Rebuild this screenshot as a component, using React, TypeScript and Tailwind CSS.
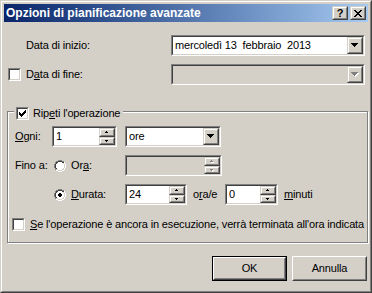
import React from 'react';

function Sunken({ className = '', disabled = false, children }: { className?: string; disabled?: boolean; children?: React.ReactNode }) {
  return (
    <div className={`border border-t-[#808080] border-l-[#808080] border-b-white border-r-white ${className}`}>
      <div className={`h-full w-full border border-t-[#404040] border-l-[#404040] border-b-[#d4d0c8] border-r-[#d4d0c8] flex ${disabled ? 'bg-[#d4d0c8]' : 'bg-white'}`}>
        {children}
      </div>
    </div>
  );
}

function Raised({ className = '', children }: { className?: string; children?: React.ReactNode }) {
  return (
    <div className={`border border-t-[#d4d0c8] border-l-[#d4d0c8] border-b-[#404040] border-r-[#404040] ${className}`}>
      <div className="h-full w-full border border-t-white border-l-white border-b-[#808080] border-r-[#808080] bg-[#d4d0c8] flex items-center justify-center">
        {children}
      </div>
    </div>
  );
}

function DownArrow({ disabled = false }: { disabled?: boolean }) {
  return (
    <svg width="8" height="5" viewBox="0 0 8 5" shapeRendering="crispEdges">
      {disabled && <path d="M1 1h7v1h-7zM2 2h5v1h-5zM3 3h3v1h-3zM4 4h1v1h-1z" fill="#ffffff" />}
      <path d="M0 0h7v1h-7zM1 1h5v1h-5zM2 2h3v1h-3zM3 3h1v1h-1z" fill={disabled ? '#808080' : '#000000'} />
    </svg>
  );
}

function SmallArrow({ up, disabled = false }: { up: boolean; disabled?: boolean }) {
  return (
    <svg width="6" height="4" viewBox="0 0 6 4" shapeRendering="crispEdges">
      {disabled && <path d={up ? 'M3 1h1v1h-1zM2 2h3v1h-3z' : 'M2 2h3v1h-3zM3 3h1v1h-1z'} fill="#ffffff" />}
      <path d={up ? 'M2 0h1v1h-1zM1 1h3v1h-3z' : 'M1 1h3v1h-3zM2 2h1v1h-1z'} fill={disabled ? '#808080' : '#000000'} />
    </svg>
  );
}

function Combo({ value, width, disabled = false }: { value?: string; width: string; disabled?: boolean }) {
  return (
    <Sunken className={`${width} h-[21px]`} disabled={disabled}>
      <div className="flex-1 pl-[2px] pt-[1px] leading-[15px] whitespace-pre">{value}</div>
      <Raised className="w-[16px] h-full">
        <DownArrow disabled={disabled} />
      </Raised>
    </Sunken>
  );
}

function Spin({ value, width, disabled = false }: { value?: string; width: string; disabled?: boolean }) {
  return (
    <Sunken className={`${width} h-[21px]`} disabled={disabled}>
      <div className="flex-1 pl-[2px] pt-[1px] leading-[15px]">{value}</div>
      <div className="w-[16px] flex flex-col">
        <Raised className="h-[9px]">
          <SmallArrow up disabled={disabled} />
        </Raised>
        <Raised className="h-[8px]">
          <SmallArrow up={false} disabled={disabled} />
        </Raised>
      </div>
    </Sunken>
  );
}

function Check({ checked = false }: { checked?: boolean }) {
  return (
    <Sunken className="w-[13px] h-[13px] shrink-0">
      {checked && (
        <svg width="9" height="9" viewBox="0 0 9 9" shapeRendering="crispEdges">
          <path d="M1 3h1v3h-1zM2 4h1v3h-1zM3 5h1v3h-1zM4 4h1v3h-1zM5 3h1v3h-1zM6 2h1v3h-1zM7 1h1v3h-1z" fill="#000" />
        </svg>
      )}
    </Sunken>
  );
}

function Radio({ checked = false }: { checked?: boolean }) {
  return (
    <svg width="12" height="12" viewBox="0 0 12 12" shapeRendering="crispEdges" className="shrink-0">
      <path d="M4 0h4v1h-4zM2 1h2v1h-2zM8 1h2v1h-2zM1 2h1v2h-1zM0 4h1v4h-1zM1 8h1v2h-1z" fill="#808080" />
      <path d="M4 1h4v1h-4zM2 2h2v1h-2zM8 2h2v1h-2zM2 3h1v1h-1zM1 4h1v4h-1zM2 8h1v1h-1z" fill="#404040" />
      <path d="M10 2h1v2h-1zM11 4h1v4h-1zM10 8h1v2h-1zM8 10h2v1h-2zM4 11h4v1h-4zM2 10h2v1h-2z" fill="#ffffff" />
      <path d="M10 4h1v4h-1zM9 8h1v1h-1zM8 9h2v1h-2zM4 10h4v1h-4zM2 9h2v1h-2z" fill="#d4d0c8" />
      <path d="M4 2h4v1h-4zM3 3h6v1h-6zM2 4h8v4h-8zM3 8h6v1h-6zM4 9h4v1h-4z" fill="#ffffff" />
      {checked && <path d="M5 4h2v1h-2zM4 5h4v2h-4zM5 7h2v1h-2z" fill="#000" />}
    </svg>
  );
}

function U({ children }: { children: React.ReactNode }) {
  return <span className="underline underline-offset-[1px] decoration-1">{children}</span>;
}

function PushButton({ label, isDefault = false }: { label: string; isDefault?: boolean }) {
  return (
    <div className={`w-[75px] h-[25px] ${isDefault ? 'border border-black' : ''}`}>
      <div className="h-full w-full border border-t-white border-l-white border-b-[#404040] border-r-[#404040]">
        <div className="h-full w-full border border-t-[#d4d0c8] border-l-[#d4d0c8] border-b-[#808080] border-r-[#808080] flex items-center justify-center">
          {label}
        </div>
      </div>
    </div>
  );
}

export default function App() {
  return (
    <div className="w-[372px] h-[293px] font-['Liberation_Sans',Arial,sans-serif] text-[11px] text-black tracking-[-0.15px]">
      <div className="h-full w-full border border-t-[#d4d0c8] border-l-[#d4d0c8] border-b-[#404040] border-r-[#404040]">
        <div className="h-full w-full border border-t-white border-l-white border-b-[#808080] border-r-[#808080] bg-[#d4d0c8] p-[2px] flex flex-col">
          {/* Title bar */}
          <div className="h-[18px] flex items-center bg-gradient-to-r from-[#0a246a] to-[#a6caf0] pl-[2px] pr-[2px]">
            <div className="flex-1 text-white font-bold text-[12px] tracking-normal">Opzioni di pianificazione avanzate</div>
            <div className="flex gap-[2px]">
              <Raised className="w-[16px] h-[14px]">
                <span className="font-bold text-[11px] leading-none tracking-normal">?</span>
              </Raised>
              <Raised className="w-[16px] h-[14px]">
                <svg width="8" height="7" viewBox="0 0 8 7" shapeRendering="crispEdges">
                  <path d="M0 0h2v1h-2zM6 0h2v1h-2zM1 1h2v1h-2zM5 1h2v1h-2zM2 2h4v1h-4zM3 3h2v1h-2zM2 4h4v1h-4zM1 5h2v1h-2zM5 5h2v1h-2zM0 6h2v1h-2zM6 6h2v1h-2z" fill="#000" />
                </svg>
              </Raised>
            </div>
          </div>

          {/* Body */}
          <div className="flex-1 flex flex-col">
            <div className="flex items-center mt-[13px]">
              <div className="w-[167px] pl-[22px]">Data di inizio:</div>
              <Combo width="w-[194px]" value="mercoledì 13  febbraio  2013" />
            </div>

            <div className="flex items-center mt-[8px]">
              <div className="w-[167px] pl-[4px] flex items-center gap-[5px]">
                <Check />
                <span>
                  D<U>a</U>ta di fine:
                </span>
              </div>
              <Combo width="w-[194px]" disabled />
            </div>

            {/* Group box */}
            <div className="relative ml-[3px] mt-[26px] w-[361px] h-[132px] border border-[#808080] shadow-[inset_1px_1px_0_#fff,1px_1px_0_#fff]">
              <div className="absolute left-[6px] top-[-7px] flex items-center gap-[4px] bg-[#d4d0c8] pl-[2px] pr-[3px]">
                <Check checked />
                <span>
                  Rip<U>e</U>ti l'operazione
                </span>
              </div>

              <div className="flex items-center mt-[14px] pl-[7px]">
                <div className="w-[37px]">
                  <U>O</U>gni:
                </div>
                <Spin width="w-[65px]" value="1" />
                <div className="w-[8px]" />
                <Combo width="w-[96px]" value="ore" />
              </div>

              <div className="flex items-center mt-[8px] pl-[7px]">
                <div className="w-[39px]">Fino a:</div>
                <div className="w-[71px] flex items-center gap-[5px]">
                  <Radio />
                  <span>
                    Or<U>a</U>:
                  </span>
                </div>
                <Spin width="w-[97px]" disabled />
              </div>

              <div className="flex items-center mt-[8px] pl-[46px]">
                <div className="w-[71px] flex items-center gap-[5px]">
                  <Radio checked />
                  <span>
                    <U>D</U>urata:
                  </span>
                </div>
                <Spin width="w-[62px]" value="24" />
                <div className="w-[38px] pl-[6px]">
                  o<U>r</U>a/e
                </div>
                <Spin width="w-[53px]" value="0" />
                <div className="pl-[6px]">
                  <U>m</U>inuti
                </div>
              </div>

              <div className="flex items-center mt-[11px] pl-[4px] gap-[5px]">
                <Check />
                <span className="whitespace-nowrap">
                  <U>S</U>e l'operazione è ancora in esecuzione, verrà terminata all'ora indicata
                </span>
              </div>
            </div>

            <div className="flex justify-end gap-[5px] mt-[13px] pr-[1px]">
              <PushButton label="OK" isDefault />
              <PushButton label="Annulla" />
            </div>
          </div>
        </div>
      </div>
    </div>
  );
}
